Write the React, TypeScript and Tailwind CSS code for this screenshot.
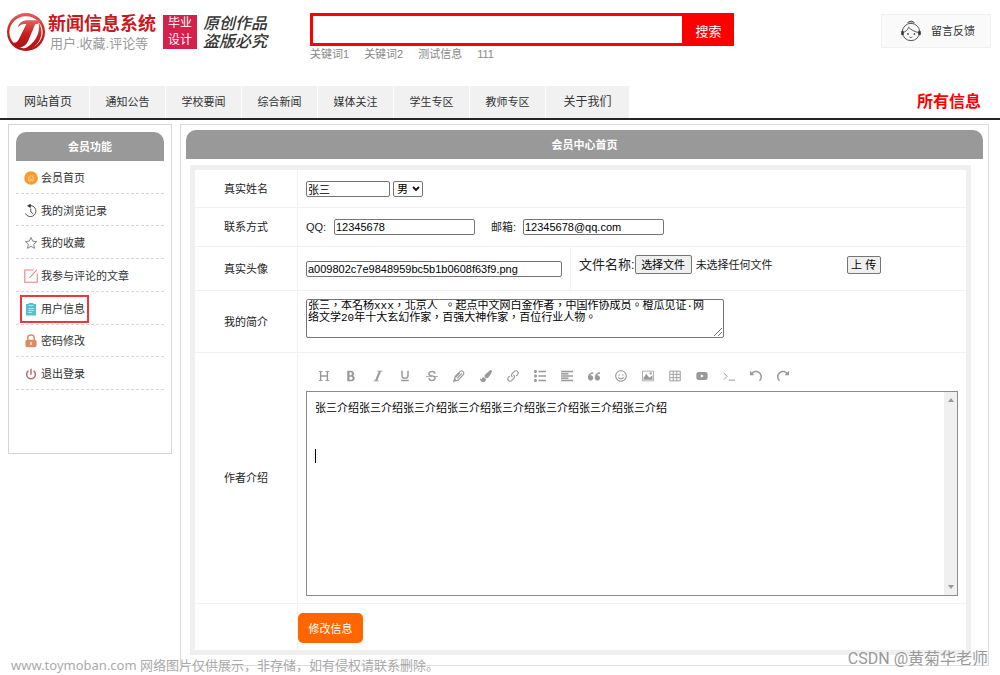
import React from "react";
import {
  ImBold,
  ImItalic,
  ImUnderline,
  ImStrikethrough,
  ImLink,
  ImList2,
  ImParagraphLeft,
  ImQuotesLeft,
  ImImage,
  ImUndo,
  ImRedo,
} from "react-icons/im";
import { FaPaintBrush, FaRegSmile, FaYoutube } from "react-icons/fa";

const keywords = ["关键词1", "关键词2", "测试信息", "111"];

const navItems = [
  { label: "网站首页", big: true },
  { label: "通知公告" },
  { label: "学校要闻" },
  { label: "综合新闻" },
  { label: "媒体关注" },
  { label: "学生专区" },
  { label: "教师专区" },
  { label: "关于我们", big: true },
];

function Logo() {
  return (
    <svg viewBox="0 0 120 120" className="h-10 w-10 shrink-0" aria-hidden="true">
      <defs>
        <linearGradient id="ring" x1="0" y1="0" x2="0" y2="1">
          <stop offset="0" stopColor="#e2605c" />
          <stop offset="0.5" stopColor="#c81e1e" />
          <stop offset="1" stopColor="#b01012" />
        </linearGradient>
      </defs>
      <circle cx="60" cy="60" r="57" fill="url(#ring)" />
      <ellipse cx="60" cy="61" rx="50" ry="48" fill="#fff" />
      <path
        d="M36 46c3-14 14-21 30-21h38l-9 11h-7L66 88c-5 11-13 17-26 19-9-3-15-8-19-15 9 1 14-3 18-11l22-45c-11-1-19 2-25 10z"
        fill="url(#ring)"
      />
      <path d="M98 30c15 25 10 56-14 74-9 6-20 8-30 7 30-14 50-43 44-81z" fill="url(#ring)" />
    </svg>
  );
}

function AgentIcon() {
  return (
    <svg viewBox="0 0 60 66" className="h-[22px] w-5 shrink-0" fill="none" stroke="#3c3c3c" strokeWidth="2.6" aria-hidden="true">
      <path d="M20 9c3-7 17-7 20 0" fill="#bbb" />
      <circle cx="30" cy="36" r="26" />
      <path d="M6 38c8-3 14-8 17-16 8 8 17 13 31 16" />
      <path d="M2 34h5v10H2zM58 34h-5v10h5z" fill="#3c3c3c" />
      <circle cx="21" cy="42" r="1.5" fill="#3c3c3c" />
      <circle cx="40" cy="42" r="1.5" fill="#3c3c3c" />
      <path d="M26 51c2 2 6 2 8 0" />
    </svg>
  );
}

const menu: { label: string; active?: boolean; icon: React.ReactNode }[] = [
  {
    label: "会员首页",
    icon: (
      <svg viewBox="0 0 14 14" className="h-3.5 w-3.5">
        <circle cx="7" cy="7" r="6.8" fill="#fd9a2e" />
        <path d="M3.8 7.2 7.2 4.4l3 2.6M4.8 7v3h1.6V8h1.4v2h1.4V6.6M9 5V3.8" fill="none" stroke="#ffd9a8" strokeWidth="0.8" />
      </svg>
    ),
  },
  {
    label: "我的浏览记录",
    icon: (
      <svg viewBox="0 0 14 14" className="h-3.5 w-3.5" fill="none" stroke="#444" strokeWidth="0.9">
        <path d="M5 1.8a5.5 5.500 0 1 1-3.6 7.6M6.8 4.5V8l2.6 2" />
        <path d="M3.6 1.8 6.4.4v3z" fill="#222" />
      </svg>
    ),
  },
  {
    label: "我的收藏",
    icon: (
      <svg viewBox="0 0 14 14" className="h-3.5 w-3.5" fill="none" stroke="#777" strokeWidth="0.9" strokeLinejoin="round">
        <path d="m7 1.500 1.7 3.6 4 .5-3 2.7.8 4L7 10.4l-3.5 1.9.8-4-3-2.7 4-.5z" />
      </svg>
    ),
  },
  {
    label: "我参与评论的文章",
    icon: (
      <svg viewBox="0 0 14 14" className="h-3.5 w-3.5" fill="none" stroke="#f47c7c" strokeWidth="1.1">
        <path d="M9.5 1H.8v12.2h12.4V4.5M5.4 9 12.8.8" />
      </svg>
    ),
  },
  {
    label: "用户信息",
    active: true,
    icon: (
      <svg viewBox="0 0 14 14" className="h-3.5 w-3.5">
        <path d="M2 2h2.6V1h4.8v1H12v11.5H2z" fill="#52bfd2" />
        <path d="M4.6 3.6h4.8M4.2 6.6h5.6M4.2 8.6h5.6M4.2 10.6h4" stroke="#d6f2f7" strokeWidth="0.8" />
      </svg>
    ),
  },
  {
    label: "密码修改",
    icon: (
      <svg viewBox="0 0 14 14" className="h-3.5 w-3.5">
        <path d="M3.8 7V3.8c0-3.6 6.4-3.6 6.4 0V7" fill="none" stroke="#dd8c61" strokeWidth="1.5" />
        <rect x="1.4" y="5.8" width="11.2" height="7.4" rx="2" fill="#dd8c61" />
        <path d="M7 8v3" stroke="#fff" strokeWidth="1.3" />
      </svg>
    ),
  },
  {
    label: "退出登录",
    icon: (
      <svg viewBox="0 0 14 14" className="h-3.5 w-3.5" fill="none" stroke="#b97878" strokeWidth="1.6" strokeLinecap="round">
        <path d="M4 4.2a4.4 4.4 0 1 0 6 0M7 2.4v4.8" />
      </svg>
    ),
  },
];

function HeadingIcon() {
  return (
    <svg viewBox="0 0 16 16" className="h-3 w-3" fill="none" stroke="currentColor">
      <path d="M3.5 2v12M12.500 2v12M3.500 8h9" strokeWidth="1.8" />
      <path d="M1 2h5M10 2h5M1 14h5M10 14h5" strokeWidth="1.2" />
    </svg>
  );
}

function Pen() {
  return (
    <svg viewBox="0 0 16 16" className="h-3 w-3" fill="none" stroke="currentColor" strokeWidth="1.5">
      <path d="M1 15 3 8.500 10 1.500c2-1.500 5.500 1.500 4 4.500l-7 7.500zM3.500 9.500 9 4M5.500 11 12 4.500M1.500 14l2-2" />
    </svg>
  );
}

function Grid() {
  return (
    <svg viewBox="0 0 16 16" className="h-3 w-3" fill="none" stroke="currentColor" strokeWidth="1.2">
      <path d="M1 1.500h14v13H1zM1 5.800h14M1 10.200h14M5.700 1.500v13M10.300 1.500v13" />
    </svg>
  );
}

function Prompt() {
  return (
    <svg viewBox="0 0 16 16" className="h-3 w-3" fill="none" stroke="currentColor" strokeWidth="1.3">
      <path d="m1 4 4.500 4.500L1 13M7.500 13.500H16" />
    </svg>
  );
}

const tools: { name: string; icon: React.ReactNode }[] = [
  { name: "标题", icon: <HeadingIcon /> },
  { name: "粗体", icon: <ImBold /> },
  { name: "斜体", icon: <ImItalic /> },
  { name: "下划线", icon: <ImUnderline /> },
  { name: "删除线", icon: <ImStrikethrough /> },
  { name: "文字颜色", icon: <Pen /> },
  { name: "背景色", icon: <FaPaintBrush /> },
  { name: "链接", icon: <ImLink /> },
  { name: "列表", icon: <ImList2 /> },
  { name: "对齐", icon: <ImParagraphLeft /> },
  { name: "引用", icon: <ImQuotesLeft /> },
  { name: "表情", icon: <FaRegSmile /> },
  { name: "图片", icon: <ImImage /> },
  { name: "表格", icon: <Grid /> },
  { name: "视频", icon: <FaYoutube /> },
  { name: "代码", icon: <Prompt /> },
  { name: "撤销", icon: <ImUndo /> },
  { name: "重做", icon: <ImRedo /> },
];

const field = "h-4 rounded-[2px] border border-[#767676] bg-white px-px text-[11px] leading-3 text-black outline-none";

function Row({ label, htmlFor, className, children }: { label?: string; htmlFor?: string; className: string; children: React.ReactNode }) {
  return (
    <div className={"flex border-b border-[#f2f2f2] last:border-b-0 " + className}>
      <div className="flex w-[103px] shrink-0 items-center justify-center border-r border-[#f2f2f2]">
        {label && <label htmlFor={htmlFor}>{label}</label>}
      </div>
      {children}
    </div>
  );
}

export default function App() {
  return (
    <div className="relative min-h-screen bg-white font-['Liberation_Sans','Noto_Sans_CJK_SC',sans-serif] text-[11px] leading-4 text-[#222]">
      <header>
        <div className="flex h-[86px] items-start pr-[9px] pl-1.5">
          <div className="flex w-[304px] shrink-0 items-start pt-3">
            <Logo />
            <div className="ml-0.5 whitespace-nowrap">
              <div className="text-[18px] leading-6 font-bold text-[#c9191e]">新闻信息系统</div>
              <div className="pl-0.5 text-[13px] leading-4 text-[#999]">用户.收藏.评论等</div>
            </div>
            <div className="mt-[3px] ml-[7px] w-[34px] bg-[#d4214b] text-center text-[12px] leading-[17px] text-white">
              毕业
              <br />
              设计
            </div>
            <div className="mt-[3px] ml-1.5 text-[16px] leading-[18px] font-medium whitespace-nowrap text-[#333] italic">
              原创作品
              <br />
              盗版必究
            </div>
          </div>
          <div className="w-[424px] pt-[13px]">
            <form className="flex h-[33px] border-[3px] border-[#f00]" onSubmit={(e) => e.preventDefault()}>
              <input aria-label="搜索内容" className="min-w-0 flex-1 bg-white px-2 text-[13px] outline-none" />
              <button className="w-[49px] bg-[#f00] pt-1 pl-1 text-[13px] text-white">搜索</button>
            </form>
            <div className="flex gap-[15px] text-[#888]">
              {keywords.map((k) => (
                <a key={k} href="#">
                  {k}
                </a>
              ))}
            </div>
          </div>
          <a href="#" className="mt-3.5 ml-auto flex h-[34px] w-[110px] items-center gap-2.5 border border-[#f0f0f0] bg-[#fafafa] pl-[19px] text-[#333]">
            <AgentIcon />
            留言反馈
          </a>
        </div>
        <nav className="flex h-[34px] items-center border-b-2 border-[#262626] pr-[19px] pl-[7px]">
          {navItems.map((n) => (
            <a
              key={n.label}
              href="#"
              className={
                "flex h-8 items-center justify-center border-r border-white bg-[#f1f1f1] text-[#333] last-of-type:border-r-0 " +
                (n.big ? "w-[83px] text-[12px]" : "w-[76px]")
              }
            >
              {n.label}
            </a>
          ))}
          <strong className="ml-auto text-[16px] text-[#f00]">所有信息</strong>
        </nav>
      </header>

      <div className="flex items-start gap-2 pt-1 pr-[11px] pl-2">
        <aside className="min-h-[330px] w-[164px] shrink-0 border border-[#d6d6d6] p-[7px]">
          <h2 className="flex h-[29px] items-center justify-center rounded-t-[10px] bg-[#999] font-bold text-white">会员功能</h2>
          <ul className="grid h-[229px] grid-rows-7">
            {menu.map((m) => (
              <li key={m.label} className="flex items-center border-b border-dashed border-[#d8d8d8] pt-0.5 pl-1">
                <a
                  href="#"
                  className={"flex items-center gap-[3px] text-[#333] " + (m.active ? "h-7 border-2 border-[#f03636] px-0.5" : "px-1")}
                >
                  {m.icon}
                  {m.label}
                </a>
              </li>
            ))}
          </ul>
        </aside>

        <main className="min-w-0 flex-1 border border-[#dcdcdc] p-[5px] pb-2.5">
          <h1 className="flex h-[29px] items-center justify-center rounded-t-[10px] bg-[#999] font-bold text-white">会员中心首页</h1>
          <form className="mt-1.5 mr-3 ml-1 border-[5px] border-[#efefef]" onSubmit={(e) => e.preventDefault()}>
            <Row label="真实姓名" htmlFor="name" className="h-[38px]">
              <div className="flex items-center gap-[3px] pl-2">
                <input id="name" defaultValue="张三" className={field + " w-[84px]"} />
                <div className="relative flex">
                  <select aria-label="性别" className={field + " w-[30px] appearance-none pl-[3px]"}>
                    <option>男</option>
                    <option>女</option>
                  </select>
                  <svg viewBox="0 0 8 6" className="pointer-events-none absolute top-[5px] right-[3px] h-1.5 w-2" fill="none" stroke="#111" strokeWidth="1.8">
                    <path d="m1 1 3 3 3-3" />
                  </svg>
                </div>
              </div>
            </Row>
            <Row label="联系方式" className="h-[39px]">
              <div className="flex items-center pl-2">
                <label htmlFor="qq" className="w-7">
                  QQ:
                </label>
                <input id="qq" defaultValue="12345678" className={field + " w-[141px]"} />
                <label htmlFor="mail" className="ml-4 w-8">
                  邮箱:
                </label>
                <input id="mail" defaultValue="12345678@qq.com" className={field + " w-[141px]"} />
              </div>
            </Row>
            <Row label="真实头像" htmlFor="avatar" className="h-11">
              <div className="flex w-[273px] items-center border-r border-[#f2f2f2] pl-2">
                <input id="avatar" defaultValue="a009802c7e9848959bc5b1b0608f63f9.png" className={field + " w-64"} />
              </div>
              <div className="flex items-center pb-2 pl-2">
                <span className="text-[13px]">文件名称:</span>
                <label htmlFor="file" className="flex h-[19px] w-[57px] items-center justify-center rounded-[2px] border border-[#767676] bg-[#efefef] text-black">
                  选择文件
                </label>
                <input id="file" type="file" className="sr-only" />
                <span className="ml-1 w-[151px]">未选择任何文件</span>
                <button className="h-[18px] w-[34px] rounded-[2px] border border-[#767676] bg-[#efefef] leading-3 text-black">上 传</button>
              </div>
            </Row>
            <Row label="我的简介" htmlFor="intro" className="h-[62px]">
              <div className="flex items-start pt-2 pl-2">
                <div className="relative flex">
                  <textarea
                    id="intro"
                    className="h-[39px] w-[418px] resize-none overflow-hidden rounded-[2px] border border-[#767676] px-px font-['Liberation_Mono','Noto_Sans_CJK_TC',monospace] text-[11px] leading-3 text-black outline-none"
                    defaultValue={"张三，本名杨xxx，北京人 。起点中文网白金作者，中国作协成员。橙瓜见证·网\n络文学20年十大玄幻作家，百强大神作家，百位行业人物。"}
                  />
                  <svg viewBox="0 0 8 8" className="pointer-events-none absolute right-0.5 bottom-0.5 h-2 w-2" stroke="#777">
                    <path d="M0 8 8 0M4 8l4-4" />
                  </svg>
                </div>
              </div>
            </Row>
            <Row label="作者介绍" htmlFor="bio" className="h-[251px]">
              <div className="min-w-0 flex-1 pr-2 pl-2">
                <div className="flex h-[38px] items-center pt-2 pl-1">
                  {tools.map((t) => (
                    <button key={t.name} type="button" aria-label={t.name} className="flex w-[27px] items-center justify-center text-[12px] text-[#999]">
                      {t.icon}
                    </button>
                  ))}
                </div>
                <div className="relative flex h-[205px] border border-[#8c8c8c]">
                  <textarea
                    id="bio"
                    className="min-w-0 flex-1 resize-none overflow-hidden px-2 pt-2 text-[11px] leading-4 text-black outline-none"
                    defaultValue={"张三介绍张三介绍张三介绍张三介绍张三介绍张三介绍张三介绍张三介绍"}
                  />
                  <span className="absolute top-[57px] left-2 h-3.5 w-px bg-black" />
                  <div className="flex w-[13px] flex-col items-center justify-between bg-[#f0f0f0] py-1.5">
                    <svg viewBox="0 0 6 4" className="h-1 w-1.5" fill="#999">
                      <path d="M0 4 3 0l3 4z" />
                    </svg>
                    <svg viewBox="0 0 6 4" className="h-1 w-1.5" fill="#999">
                      <path d="m0 0 3 4 3-4z" />
                    </svg>
                  </div>
                </div>
              </div>
            </Row>
            <Row className="h-[46px]">
              <div className="flex items-center pt-0.5">
                <button className="h-[30px] w-[65px] rounded-[5px] bg-[#ff6600] pt-0.5 text-white">修改信息</button>
              </div>
            </Row>
          </form>
        </main>
      </div>

      <p className="absolute bottom-0 left-[11px] font-['Noto_Sans','Noto_Sans_CJK_SC',sans-serif] text-[13px] leading-5 text-[#aaa]">
        www.toymoban.com 网络图片仅供展示，非存储，如有侵权请联系删除。
      </p>
      <p className="absolute right-3 bottom-1.5 font-[Roboto,'Noto_Sans_CJK_SC',sans-serif] text-[16px] leading-5 text-[#999]">CSDN @黄菊华老师</p>
    </div>
  );
}
